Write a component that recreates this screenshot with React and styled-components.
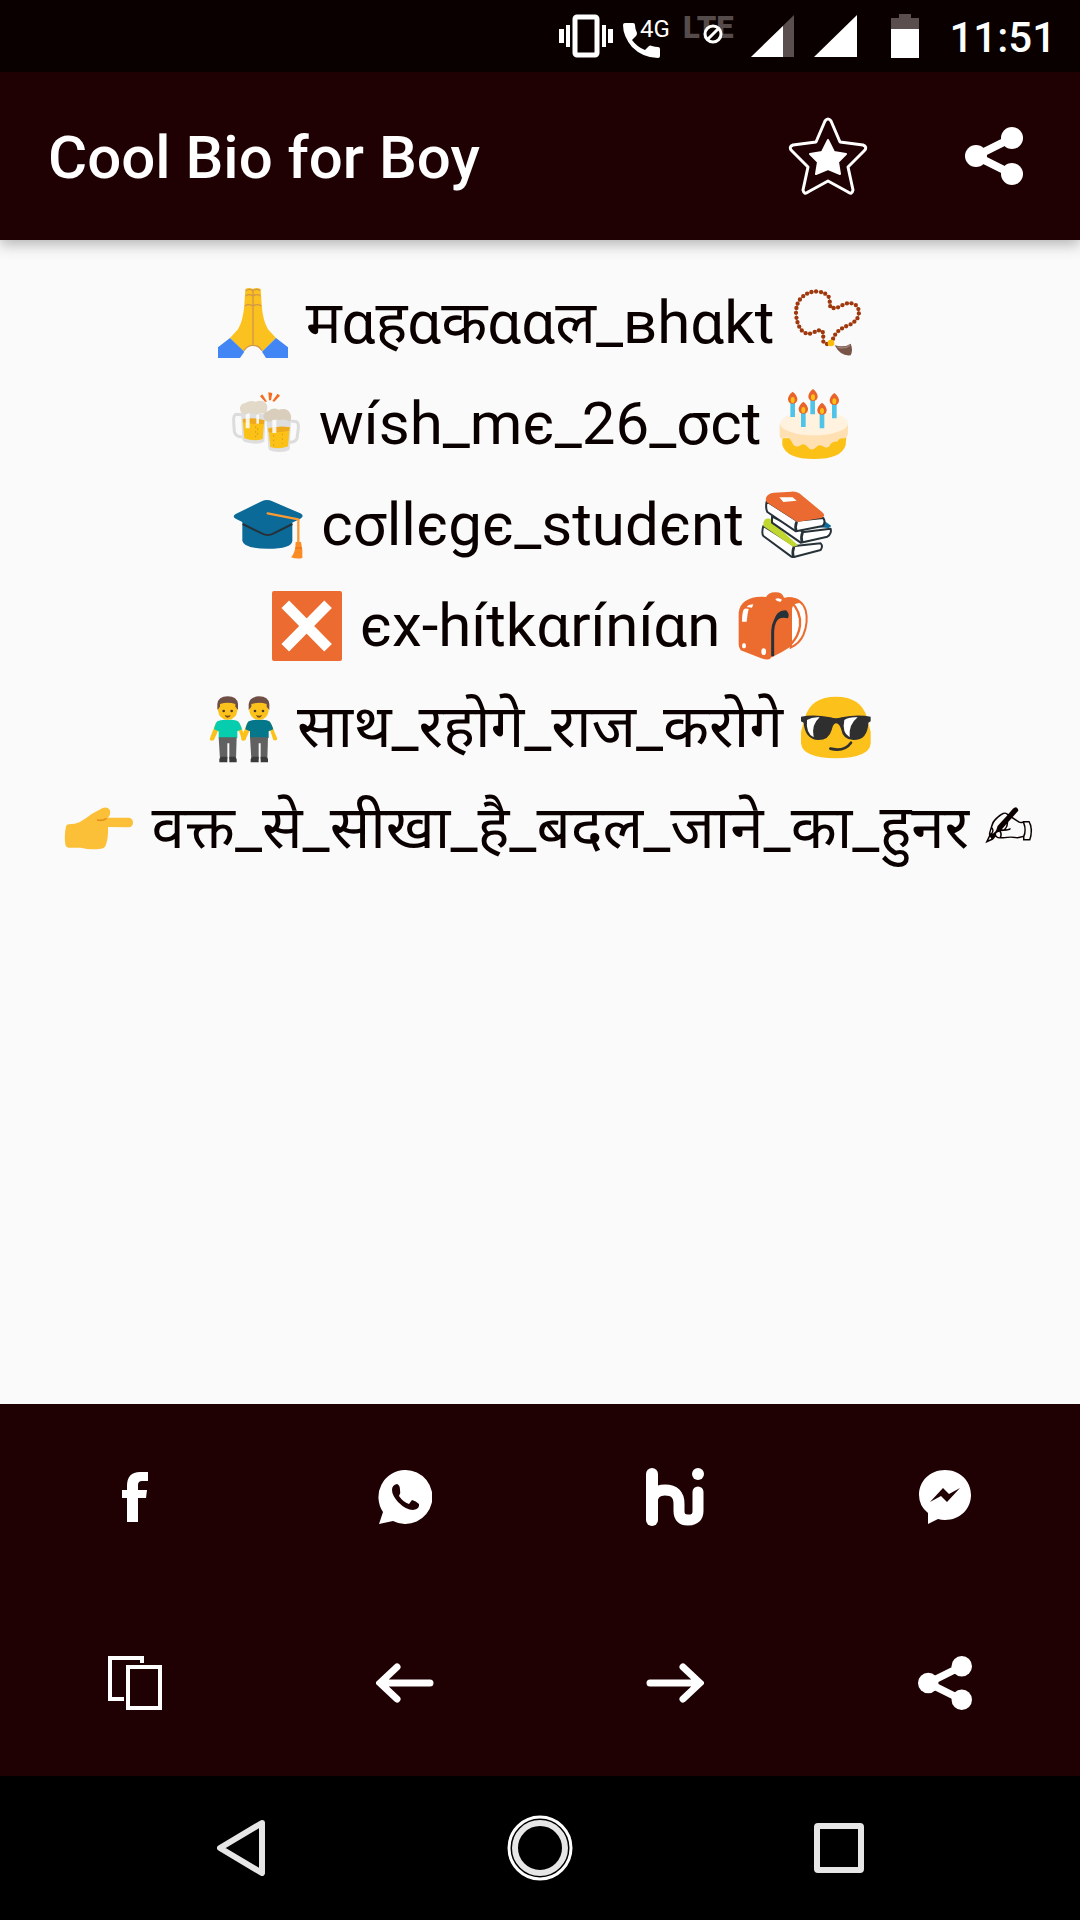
import React from 'react';
import styled, { createGlobalStyle } from 'styled-components';

const GlobalStyle = createGlobalStyle`
  * {
    box-sizing: border-box;
  }

  body {
    margin: 0;
    font-family: Roboto, 'Noto Sans', 'Noto Sans Devanagari', sans-serif;
    background: #fafafa;
  }
`;

const Screen = styled.div`
  display: flex;
  flex-direction: column;
  min-height: 100vh;
`;

const StatusBar = styled.div`
  display: flex;
  align-items: center;
  justify-content: flex-end;
  height: 72px;
  padding-right: 24px;
  background: #0a0000;
  color: #fff;
`;

const StatusIcon = styled.svg`
  display: block;
  flex: none;
  margin-right: ${(props) => props.$gap || 0}px;
  overflow: visible;
`;

const Clock = styled.time`
  padding-top: 4px;
  font-size: 42px;
  font-weight: 500;
  line-height: 48px;
`;

const AppBar = styled.header`
  position: relative;
  display: flex;
  align-items: center;
  height: 168px;
  padding: 0 38px 0 48px;
  background: #1f0003;
  box-shadow: 0 4px 14px rgba(0, 0, 0, 0.3);
`;

const Title = styled.h1`
  flex: 1;
  margin: 0;
  padding-top: 4px;
  color: #fff;
  font-size: 60px;
  font-weight: 500;
  line-height: 72px;
`;

const IconButton = styled.button`
  display: flex;
  align-items: center;
  justify-content: center;
  padding: 0;
  border: 0;
  background: none;
  color: #fff;
  cursor: pointer;

  svg {
    display: block;
  }
`;

const BarActions = styled.div`
  display: flex;
  gap: 70px;

  ${IconButton} {
    width: 96px;
    height: 96px;
  }
`;

const Bio = styled.main`
  flex: 1;
  padding-top: 32px;
  color: #0a0000;
  font-size: 60px;
  text-align: center;
`;

const BioLine = styled.p`
  margin: 0;
  line-height: 101px;
  white-space: pre;
`;

const EmojiSvg = styled.svg`
  width: 70px;
  height: 70px;
  margin: 0 3px;
  vertical-align: -15px;
  overflow: visible;
`;

const Symbol = styled.span`
  font-family: 'DejaVu Sans', sans-serif;
`;

const ActionGrid = styled.footer`
  display: grid;
  grid-template-columns: repeat(4, 1fr);
  grid-auto-rows: 186px;
  background: #1f0003;
`;

const NavBar = styled.nav`
  display: grid;
  grid-template-columns: repeat(3, 1fr);
  height: 144px;
  padding: 0 8.5%;
  background: #000;
`;

// Emoji are drawn on a 210 unit square
const Emoji = ({ label, children }) => (
  <EmojiSvg viewBox="0 0 210 210" role="img" aria-label={label}>
    {children}
  </EmojiSvg>
);

const FoldedHands = () => (
  <Emoji label="folded hands">
    <path fill="#fbc11e" d="M82 3 L79 50 Q76 96 60 124 L36 150 L76 190 Q86 174 105 172 Q124 174 134 190 L174 150 L150 124 Q134 96 131 50 L128 3 Q116 -3 105 3 Q94 -3 82 3Z" />
    <path fill="none" stroke="#d2974b" strokeWidth="4" d="M105 4V172M84 8q10-8 20 0q12-8 22 0M83 24q10-8 21 0q12-8 23 0M81 54q10-8 23 0q14-8 26 0M78 188q10-16 27-16t27 16" />
    <path fill="#4285f4" d="M0 178L36 150L79 191L66 210H0ZM210 178L174 150L132 191L144 210H210Z" />
  </Emoji>
);

const PrayerBeads = () => (
  <Emoji label="prayer beads">
    <path fill="none" stroke="#c98d6a" strokeWidth="3" d="M105 168Q92 166 94 156Q94 142 92 130Q82 122 65 134Q46 142 32 130Q14 112 12 76Q12 42 32 26Q52 8 80 11Q104 14 112 30Q114 46 115 58Q132 64 150 52Q172 40 190 50Q206 64 198 88Q188 104 170 112Q130 126 122 156" />
    <path fill="none" stroke="#a0380d" strokeWidth="13" strokeLinecap="round" strokeDasharray="0 14" d="M105 168Q92 166 94 156Q94 142 92 130Q82 122 65 134Q46 142 32 130Q14 112 12 76Q12 42 32 26Q52 8 80 11Q104 14 112 30Q114 46 115 58Q132 64 150 52Q172 40 190 50Q206 64 198 88Q188 104 170 112Q130 126 122 156" />
    <path fill="#795548" d="M128 172Q158 180 176 167Q184 186 176 202Q146 206 128 172Z" />
    <path fill="none" stroke="#a08478" strokeWidth="4" d="M136 177Q160 184 174 172" />
    <circle cx="117" cy="165" r="10" fill="#fbbc05" />
  </Emoji>
);

const BeerMugs = () => (
  <Emoji label="clinking beer mugs">
    <g fill="none" stroke="#dcdcdc" strokeWidth="9">
      <path d="M36 78L16 76Q7 78 8 96L10 128Q14 144 34 144" />
      <path d="M180 96L196 98Q204 102 202 118L198 148Q194 160 176 160" />
    </g>
    <path fill="#dedede" d="M30 68L104 74L100 158Q84 168 56 162Q34 160 34 150ZM106 86L180 90L176 182Q160 192 134 188Q112 186 112 176Z" />
    <path fill="#fbc116" d="M35 90L100 94L95 150Q70 158 40 148ZM112 116L176 114L171 172Q146 182 118 174Z" />
    <path fill="#eda91b" d="M36 90Q68 84 100 94L99 104Q68 108 37 100ZM112 120Q140 108 176 115L175 125Q140 132 113 130Z" />
    <path fill="#fff" d="M44 72h12v46h-12zM76 76h8v28h-8zM124 92h12v40h-12z" opacity=".85" />
    <path fill="#e3d9c9" d="M30 70Q20 48 42 42Q58 32 74 38Q98 30 108 48Q112 62 103 74Q88 68 76 78Q60 68 46 76Q36 78 30 70Z" />
    <path fill="#d9cdbb" d="M101 92Q90 72 112 66Q128 54 142 62Q170 54 178 74Q184 88 176 98Q160 88 146 94Q128 88 118 98Q108 100 101 92Z" />
    <path fill="none" stroke="#d99c1c" strokeWidth="3" strokeDasharray="5 9" d="M74 112v34M80 118v28M128 138v34M154 134v30" />
    <path fill="#f56c1e" d="M87 22L94 16L108 38L102 38ZM112 10L124 12L120 34L114 34ZM147 20L140 14L124 36L130 38Z" />
  </Emoji>
);

const BirthdayCake = () => (
  <Emoji label="birthday cake">
    <path fill="#fbc117" d="M10 148V168Q22 210 105 210Q188 210 200 168L202 142Z" />
    <path fill="#ffe0b2" d="M2 105V140Q4 154 18 146Q32 142 40 162Q48 178 62 170Q74 160 84 172Q96 188 110 176Q120 164 132 172Q148 182 154 166Q162 156 174 158Q182 146 192 148Q206 150 207 130V105Z" />
    <ellipse cx="105" cy="103" rx="102" ry="36" fill="#fff3e0" />
    <path fill="#4fc3e8" d="M34 40h14v44H34zM94 32h14v44H94zM159 44h14v44H159zM66 70h14v44H66zM122 74h14v44H122z" />
    <g fill="#e8642c">
      <path d="M41 8q14 10 14 24q-2 12-14 12t-14-12q0-14 14-24zM102 0q14 10 14 24q-2 12-14 12t-14-12q0-14 14-24zM166 12q14 10 14 24q-2 12-14 12t-14-12q0-14 14-24zM73 38q14 10 14 24q-2 12-14 12t-14-12q0-14 14-24zM129 41q14 10 14 24q-2 12-14 12t-14-12q0-14 14-24z" />
    </g>
    <g fill="#fbc117">
      <ellipse cx="41" cy="33" rx="6" ry="9" />
      <ellipse cx="102" cy="25" rx="6" ry="9" />
      <ellipse cx="166" cy="37" rx="6" ry="9" />
      <ellipse cx="73" cy="63" rx="6" ry="9" />
      <ellipse cx="129" cy="66" rx="6" ry="9" />
    </g>
  </Emoji>
);

const GraduationCap = () => (
  <Emoji label="graduation cap">
    <path fill="#0b6a98" d="M28 92V152Q32 176 105 176Q176 176 178 152V98Z" />
    <path fill="none" stroke="#263238" strokeWidth="6" d="M29 102L86 130Q105 140 122 130L178 102" />
    <path fill="#0b6a98" d="M8 72L86 34Q102 26 118 34L202 70Q216 78 202 86L124 124Q106 134 88 126L8 86Q-4 80 8 72Z" />
    <path fill="none" stroke="#f99a33" strokeWidth="7" strokeLinecap="round" strokeLinejoin="round" d="M104 70L196 88V160" />
    <path fill="#fb8c24" d="M188 156h16q6 24 4 48q-16 4-34-2q14-14 14-46z" />
    <path stroke="#e06a1a" strokeWidth="3" d="M187 174h20" />
  </Emoji>
);

const Books = () => (
  <Emoji label="books">
    <path fill="#c0d72f" d="M4 98Q8 82 24 86L100 162L92 172Z" />
    <path fill="#fff" stroke="#263238" strokeWidth="6" strokeLinejoin="round" d="M4 108Q-2 130 4 138L88 200Q92 202 96 201L176 180Q184 168 176 160L98 168Z" />
    <path fill="#c0d72f" d="M4 108Q2 92 20 88L108 166L94 171Z" />
    <path fill="none" stroke="#263238" strokeWidth="8" d="M96 170Q90 184 94 201" />
    <path fill="#0b6a98" d="M180 88L208 108L200 114L170 112Z" />
    <path fill="#fff" stroke="#263238" strokeWidth="6" strokeLinejoin="round" d="M30 80V98L116 158L196 140Q210 130 206 116L126 126Z" />
    <path fill="none" stroke="#263238" strokeWidth="8" d="M122 126Q116 140 120 156" />
    <path fill="#fff" stroke="#263238" strokeWidth="6" strokeLinejoin="round" d="M14 34Q10 54 16 66L102 124L182 108Q192 98 184 84L104 92Z" />
    <path fill="#ea6a32" d="M12 24Q16 10 36 8L88 5Q102 4 112 10L180 66Q194 78 178 84L106 96L16 38Q10 34 12 24Z" />
    <path fill="none" stroke="#263238" strokeWidth="8" d="M104 95Q98 110 103 124" />
    <path fill="#fff" d="M52 22L92 22L104 32L64 36Z" />
  </Emoji>
);

const CrossMark = () => (
  <Emoji label="cross mark button">
    <rect width="210" height="210" rx="6" fill="#eb6b30" />
    <path stroke="#fff" strokeWidth="32" strokeLinecap="square" d="M51 51L157 159M157 51L51 159" />
  </Emoji>
);

const Backpack = () => (
  <Emoji label="backpack">
    <path fill="#fff" stroke="#ec6c30" strokeWidth="6" d="M150 22Q190 20 203 58Q212 94 196 132Q184 158 158 170Z" />
    <path fill="none" stroke="#ec6c30" strokeWidth="7" d="M156 30Q190 60 186 104Q182 136 160 158" />
    <path fill="#ec6c30" d="M84 18Q92 4 110 4Q132 2 138 20Q170 14 190 36Q164 34 162 54V164Q130 186 98 200L96 204Q82 208 60 198L8 178Q2 170 2 160V66Q4 42 22 30Q46 14 84 18Z" />
    <path fill="#fff" d="M16 58Q18 50 32 54Q28 68 26 92L12 92Q12 70 16 58ZM26 48Q32 40 46 40L42 50ZM112 24q10-6 20 2l-4 6q-12 0-16-8z" />
    <ellipse cx="18" cy="164" rx="6" ry="8" fill="#fff" />
    <ellipse cx="77" cy="182" rx="7" ry="10" fill="#fff" />
    <path fill="none" stroke="#263238" strokeWidth="9" d="M104 196V120Q106 84 128 74" />
    <path fill="#263238" d="M108 94Q112 58 144 58Q156 68 150 82Q124 76 108 94Z" />
  </Emoji>
);

const Man = ({ x, shirt, hair }) => (
  <g transform={`translate(${x} 0)`}>
    <path fill="#fcc21b" d="M20 92L2 138Q0 146 8 146L14 144L30 108H86L98 144Q108 148 110 140L90 92Z" />
    <path fill={shirt} d="M24 88Q36 82 55 84Q78 82 86 88Q92 94 98 112L84 118V138H28V118L14 112Q18 94 24 88Z" />
    <path fill="#616161" d="M28 136H82L80 202H60V154H54V202H32Z" />
    <path fill="#3a3a3a" d="M30 202q0-6 8-8h16v17H30zM60 194h14q8 2 8 8v9H60z" />
    <path fill="#fcc21b" d="M26 40Q24 20 55 20Q86 20 84 40V56Q80 82 55 84Q30 82 26 56Z" />
    <path fill={hair} d="M24 54V36Q26 14 55 13Q84 14 86 36V54L78 44V36Q56 28 32 36V44Z" />
    <circle cx="43" cy="57" r="4" fill="#4a3832" />
    <circle cx="67" cy="57" r="4" fill="#4a3832" />
    <path fill="#7a4a1e" d="M46 69q9 4 18 0q-2 8-9 8t-9-8z" />
  </g>
);

const MenHoldingHands = () => (
  <Emoji label="men holding hands">
    <Man x={1} shirt="#06cdae" hair="#6f4f45" />
    <Man x={95} shirt="#04788a" hair="#6f4f45" />
  </Emoji>
);

const Sunglasses = () => (
  <Emoji label="smiling face with sunglasses">
    <path fill="#fcc21b" d="M12 76Q30 14 105 14Q180 14 198 76L209 120V154Q206 198 105 199Q4 198 0 154V120Z" />
    <path fill="#2f2f2f" d="M0 74Q40 66 88 76Q105 82 122 76Q168 66 209 74V88L202 92Q200 144 158 144Q126 144 120 110Q114 94 104 94Q96 96 92 114Q84 144 52 144Q12 142 8 92L0 88Z" />
    <path fill="#fff" d="M18 84Q34 74 56 76Q30 98 38 136Q14 124 18 84ZM130 84Q144 74 170 76Q142 98 146 136Q122 122 130 84Z" />
    <path fill="none" stroke="#2f2f2f" strokeWidth="8" strokeLinecap="round" d="M88 170Q130 180 150 152" />
  </Emoji>
);

const PointingHand = () => (
  <Emoji label="backhand index pointing right">
    <path fill="#fbc038" d="M14 94Q34 94 46 88Q66 76 84 62L116 45Q130 40 137 50Q142 62 132 74H194Q207 76 207 89Q206 102 194 103L132 102Q134 136 124 160Q120 168 110 167Q80 172 50 164H14Q6 164 4 154Q0 130 6 100Q8 94 14 94Z" />
    <path fill="none" stroke="#e58e1a" strokeWidth="5" d="M99 80Q112 86 128 76" />
  </Emoji>
);

const StarIcon = () => (
  <svg width="80" height="80" viewBox="0 0 80 80">
    <path fill="none" stroke="#fff" strokeWidth="3" strokeLinejoin="round" d="M37 5Q40 1 43 5L52 26L75 29Q80 31 76 35L60 51L65 74Q64 79 60 76L40 65L20 76Q16 79 15 74L20 51L4 35Q0 31 5 29L28 26Z" />
    <path fill="#fff" stroke="#fff" strokeWidth="2" strokeLinejoin="round" d="M40 24L46 36L58 38L50 46L52 58L40 53L28 58L30 46L22 38L34 36Z" />
  </svg>
);

const ShareIcon = ({ size }) => (
  <svg width={size} height={size} viewBox="0 0 58 58" fill="#fff">
    <path fill="none" stroke="#fff" strokeWidth="8" d="M47 11L11 29L47 47" />
    <circle cx="11" cy="29" r="11" />
    <circle cx="47" cy="11" r="11" />
    <circle cx="47" cy="47" r="11" />
  </svg>
);

const FacebookIcon = () => (
  <svg width="26" height="50" viewBox="0 0 26 50" fill="#fff">
    <path d="M5 50V26H0V18H5V14Q5 0 18 0H26V9H20Q16 9 16 13V18H25L24 26H16V50Z" />
  </svg>
);

const WhatsAppIcon = () => (
  <svg width="54" height="54" viewBox="0 0 54 54">
    <path fill="#fff" d="M27 0A27 27 0 1 1 15 51L1 54L5 42A27 27 0 0 1 27 0Z" />
    <path fill="#1f0003" d="M14 20Q14 15 19 14Q22 15 22 20Q23 23 21 26Q25 32 31 34L34 30Q38 31 41 34Q42 39 35 40Q28 40 20 32Q14 25 14 20Z" />
  </svg>
);

const HikeIcon = () => (
  <svg width="58" height="58" viewBox="0 0 58 58" fill="none" stroke="#fff" strokeWidth="12" strokeLinecap="round">
    <path d="M6 6V52" />
    <path d="M6 36Q6 22 19 22Q33 22 33 36V43Q33 52 42 52Q52 52 52 43V24" strokeWidth="11" />
    <circle cx="52" cy="6" r="6" fill="#fff" stroke="none" />
  </svg>
);

const MessengerIcon = () => (
  <svg width="52" height="54" viewBox="0 0 52 54">
    <path fill="#fff" d="M26 0C41 0 52 11 52 25S41 50 26 50Q22 50 19 49L9 54V43Q0 36 0 25C0 11 11 0 26 0Z" />
    <path fill="#1f0003" d="M11 32L24 18L30 24L41 18L28 32L22 26Z" />
  </svg>
);

const CopyIcon = () => (
  <svg width="54" height="54" viewBox="0 0 54 54" fill="none" stroke="#fff" strokeWidth="4">
    <path d="M34 7V2H2V43H16" />
    <rect x="20" y="11" width="32" height="41" />
  </svg>
);

const ArrowLeftIcon = () => (
  <svg width="58" height="40" viewBox="0 0 58 40" fill="none" stroke="#fff" strokeWidth="7" strokeLinecap="round">
    <path d="M21 4L4 20L21 36M6 20H54" />
  </svg>
);

const ArrowRightIcon = () => (
  <svg width="58" height="40" viewBox="0 0 58 40" fill="none" stroke="#fff" strokeWidth="7" strokeLinecap="round">
    <path d="M37 4L54 20L37 36M52 20H4" />
  </svg>
);

const bio = [
  { id: 1, before: <FoldedHands />, text: ' मαहαकααल_вhαkt ', after: <PrayerBeads /> },
  { id: 2, before: <BeerMugs />, text: ' wísh_mє_26_σct ', after: <BirthdayCake /> },
  { id: 3, before: <GraduationCap />, text: ' cσllєgє_studєnt ', after: <><Books />{' '}</> },
  { id: 4, before: <CrossMark />, text: ' єx-hítkαríníαn ', after: <Backpack /> },
  { id: 5, before: <MenHoldingHands />, text: ' साथ_रहोगे_राज_करोगे ', after: <Sunglasses /> },
  { id: 6, before: <>{' '}<PointingHand /></>, text: ' वक्त_से_सीखा_है_बदल_जाने_का_हुनर ', after: <Symbol>✍</Symbol> },
];

const actions = [
  { label: 'Facebook', icon: <FacebookIcon /> },
  { label: 'WhatsApp', icon: <WhatsAppIcon /> },
  { label: 'Hike', icon: <HikeIcon /> },
  { label: 'Messenger', icon: <MessengerIcon /> },
  { label: 'Copy', icon: <CopyIcon /> },
  { label: 'Previous', icon: <ArrowLeftIcon /> },
  { label: 'Next', icon: <ArrowRightIcon /> },
  { label: 'Share', icon: <ShareIcon size={54} /> },
];

const App = () => (
  <>
    <GlobalStyle />
    <Screen>
      <StatusBar>
        <StatusIcon $gap={10} width="54" height="42" viewBox="0 0 54 42" fill="#fff">
          <path d="M0 14h5v14H0zM7 10h4v22H7zM43 10h4v22h-4zM49 14h5v14h-5z" />
          <rect x="16" y="2" width="22" height="38" rx="2" fill="none" stroke="#fff" strokeWidth="5" />
        </StatusIcon>
        <StatusIcon $gap={12} width="50" height="44" viewBox="0 0 50 44">
          <path fill="#fff" d="M2 9H10Q12 9 12 11Q12 15 14 19Q14 21 13 22L9 26Q14 33 22 36L26 32Q27 31 29 32Q32 33 35 33Q37 33 37 35V42Q37 44 35 44Q20 44 9 33Q0 22 0 11Q0 9 2 9Z" />
          <text x="17" y="23" fill="#fff" fontSize="24">4G</text>
        </StatusIcon>
        <StatusIcon $gap={12} width="54" height="44" viewBox="0 0 54 44">
          <text x="-2" y="24" fill="#564b4b" fontSize="31" fontWeight="900">LTE</text>
          <circle cx="28" cy="20" r="8" fill="#0a0000" stroke="#fff" strokeWidth="3" />
          <path stroke="#fff" strokeWidth="3" d="M23 25L33 15" />
        </StatusIcon>
        <StatusIcon $gap={20} width="43" height="42" viewBox="0 0 43 42">
          <path fill="#5a4e4e" d="M0 42L43 0V42Z" />
          <path fill="#fff" d="M0 42L32 11V42Z" />
        </StatusIcon>
        <StatusIcon $gap={34} width="43" height="42" viewBox="0 0 43 42">
          <path fill="#fff" d="M0 42L43 0V42Z" />
        </StatusIcon>
        <StatusIcon $gap={30} width="28" height="44" viewBox="0 0 28 44">
          <path fill="#5a4e4e" d="M8 0H20V4H28V16H0V4H8Z" />
          <path fill="#fff" d="M0 15H28V44H0Z" />
        </StatusIcon>
        <Clock>11:51</Clock>
      </StatusBar>
      <AppBar>
        <Title>Cool Bio for Boy</Title>
        <BarActions>
          <IconButton type="button" aria-label="Favourite"><StarIcon /></IconButton>
          <IconButton type="button" aria-label="Share"><ShareIcon size={58} /></IconButton>
        </BarActions>
      </AppBar>
      <Bio lang="sa">
        {bio.map((line) => (
          <BioLine key={line.id}>
            {line.before}{line.text}{line.after}
          </BioLine>
        ))}
      </Bio>
      <ActionGrid>
        {actions.map((action) => (
          <IconButton key={action.label} type="button" aria-label={action.label}>
            {action.icon}
          </IconButton>
        ))}
      </ActionGrid>
      <NavBar>
        <IconButton type="button" aria-label="Back">
          <svg width="48" height="56" viewBox="0 0 48 56">
            <path fill="none" stroke="#e6e6e6" strokeWidth="6" strokeLinejoin="round" d="M45 3L3 28L45 53Z" />
          </svg>
        </IconButton>
        <IconButton type="button" aria-label="Home">
          <svg width="66" height="66" viewBox="0 0 66 66" fill="none">
            <circle cx="33" cy="33" r="31" stroke="#fff" strokeWidth="3" />
            <circle cx="33" cy="33" r="25" stroke="#e6e6e6" strokeWidth="6" />
          </svg>
        </IconButton>
        <IconButton type="button" aria-label="Recent apps">
          <svg width="50" height="50" viewBox="0 0 50 50">
            <rect x="3" y="3" width="44" height="44" rx="1" fill="none" stroke="#e6e6e6" strokeWidth="6" strokeLinejoin="round" />
          </svg>
        </IconButton>
      </NavBar>
    </Screen>
  </>
);

export default App;
